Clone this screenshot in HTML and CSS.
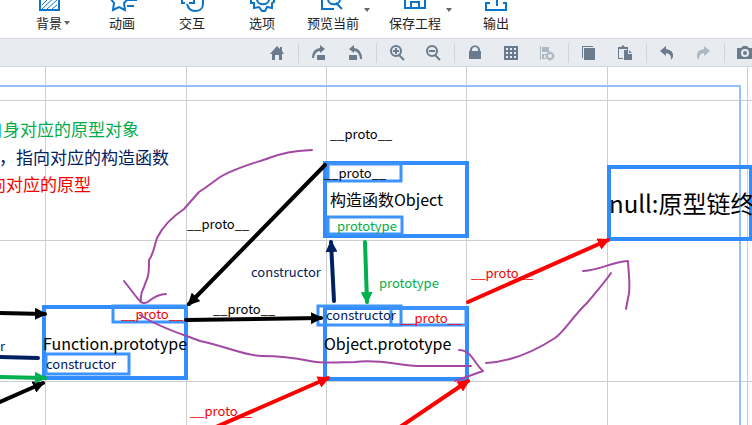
FILE: index.html
```html
<!DOCTYPE html>
<html lang="zh-CN">
<head>
<meta charset="utf-8">
<title>原型链</title>
<link rel="stylesheet" href="styles.css">
</head>
<body>
<header class="ribbon">
  <button class="command command-first"><svg class="command-icon" viewBox="0 0 32 22"><path class="thick" d="M7 -10H26V20H7Z"/><path d="M9 15L17 7M9 19L24 5M14 19L24 10M19 19L24 15"/></svg><span class="command-label">背景</span><i class="caret caret-inline"></i></button>
  <button class="command"><svg class="command-icon" viewBox="0 0 32 22"><path class="thick" d="M4 8L8 13L7 20L13 17L19 20L18 13L22 9M22 10H31M21 16H28"/></svg><span class="command-label">动画</span></button>
  <button class="command"><svg class="command-icon" viewBox="0 0 32 22"><path class="thick" d="M6 9V13H9M13 13H18V4M11 14C12 18 15 21 19 21C24 21 27 18 27 14V10"/></svg><span class="command-label">交互</span></button>
  <button class="command"><svg class="command-icon" viewBox="0 0 32 22"><path class="thick" d="M5 9V13L8 13L8 18L13 17L16 21L19 21L21 17L26 18L26 13L28 12V8M11 9C11 16 23 16 23 9"/></svg><span class="command-label">选项</span></button>
  <button class="command command-view"><svg class="command-icon" viewBox="0 0 32 22"><path class="thick" d="M5 5V19H17M11 9C11 16 23 16 23 9M19 13L25 19"/></svg><span class="command-label">预览当前</span><i class="caret caret-corner"></i></button>
  <button class="command command-save"><svg class="command-icon" viewBox="0 0 32 22"><path class="thick" d="M6 4V18H26V4M12 18V12H20V18"/></svg><span class="command-label">保存工程</span><i class="caret caret-corner"></i></button>
  <button class="command"><svg class="command-icon" viewBox="0 0 32 22"><path class="thick" d="M10 13H6V20H26V13H23M17 4V16"/></svg><span class="command-label">输出</span></button>
</header>
<nav class="toolbar" aria-label="工具栏">
  <button class="tool" aria-label="主页"><svg viewBox="0 0 16 16"><path d="M1 9L8 1L11 4V2H13V6L15 9H13V15H10V10H6V15H3V9Z"/></svg></button>
  <i class="divider"></i>
  <button class="tool" aria-label="向右旋转"><svg viewBox="0 0 16 16"><path d="M6 10H14V15H6ZM9 0L14 4L9 8V6Q4 6 3 13H1Q1 4 9 3Z"/></svg></button>
  <button class="tool" aria-label="向左旋转"><svg viewBox="0 0 16 16"><path d="M2 10H10V15H2ZM7 0L2 4L7 8V6Q12 6 13 14H15Q15 4 7 3Z"/></svg></button>
  <i class="divider"></i>
  <button class="tool" aria-label="放大"><svg class="outline" viewBox="0 0 16 16"><circle cx="7" cy="6" r="5"/><path d="M10 10L15 15M4 6H10M7 3V9"/></svg></button>
  <button class="tool" aria-label="缩小"><svg class="outline" viewBox="0 0 16 16"><circle cx="7" cy="6" r="5"/><path d="M10 10L15 15M4 6H10"/></svg></button>
  <i class="divider"></i>
  <button class="tool" aria-label="锁定"><svg viewBox="0 0 16 16"><path d="M2 6H3V5C3 -1 13 -1 13 5V6H14V14H2ZM5 6H11V5C11 1 5 1 5 5Z"/></svg></button>
  <button class="tool" aria-label="网格"><svg viewBox="0 0 16 16"><path fill-rule="evenodd" d="M1 1H15V15H1ZM3 3V5H5V3ZM7 3V5H9V3ZM11 3V5H13V3ZM3 7V9H5V7ZM7 7V9H9V7ZM11 7V9H13V7ZM3 11V13H5V11ZM7 11V13H9V11ZM11 11V13H13V11Z"/></svg></button>
  <button class="tool tool-faded" aria-label="对齐设置"><svg viewBox="0 0 16 16"><path d="M1 1H2V15H1ZM3 2H10V7H3ZM3 9H7V10H5V13H7V14H3Z"/><circle class="ring" cx="11" cy="11" r="3"/><path class="teeth" d="M11 6V8M11 14V16M6 11H8M14 11H16M8 8L9 9M13 13L14 14M8 14L9 13M13 9L14 8"/></svg></button>
  <i class="divider"></i>
  <button class="tool" aria-label="复制"><svg viewBox="0 0 16 16"><path d="M1 1H12V2H2V13H1ZM3 3H14V15H3Z"/></svg></button>
  <button class="tool" aria-label="粘贴"><svg viewBox="0 0 16 16"><path d="M1 2H4L6 0L8 2H11V5H10V4H2V13H6V14H1ZM7 5H11V9H15V15H7ZM12 5L15 8H12Z"/></svg></button>
  <i class="divider"></i>
  <button class="tool" aria-label="撤销"><svg viewBox="0 0 16 16"><path d="M1 6L7 1V4Q15 5 14 12L12 15Q13 9 7 8V11Z"/></svg></button>
  <button class="tool tool-faded" aria-label="重做"><svg viewBox="0 0 16 16"><path d="M15 6L9 1V4Q1 5 2 12L4 15Q3 9 9 8V11Z"/></svg></button>
  <i class="divider"></i>
  <button class="tool" aria-label="截图"><svg viewBox="0 0 16 16"><path fill-rule="evenodd" d="M0 3H4L6 1H10L12 3H16V14H0ZM8 4A4 4 0 1 0 8 12A4 4 0 1 0 8 4ZM8 6A2 2 0 1 1 8 10A2 2 0 1 1 8 6Z"/></svg></button>
</nav>
<main class="canvas">
<svg class="diagram" width="752" height="358" viewBox="0 67 752 358">
  <defs>
    <marker id="tip" viewBox="0 0 12 12" refX="10" refY="6" markerWidth="12" markerHeight="12" markerUnits="userSpaceOnUse" orient="auto"><path d="M0 0L12 6L0 12Z" fill="context-stroke"/></marker>
  </defs>
  <path class="grid" d="M45.500 67V425M186.500 67V425M326.500 67V425M466.500 67V425M607.500 67V425M747.500 67V425M0 100.500H752M0 240.500H752M0 381.500H752"/>
  <path class="page-frame" d="M0 86H740V425"/>
  <g class="box">
    <rect x="325" y="163" width="142" height="73"/>
    <rect x="44" y="307" width="142" height="71"/>
    <rect x="325" y="308" width="142" height="71"/>
    <rect x="609" y="167" width="142" height="72"/>
  </g>
  <g class="slot">
    <rect x="328" y="164" width="73" height="17"/>
    <rect x="328" y="217" width="74" height="17"/>
    <rect x="113" y="306" width="73" height="16"/>
    <rect x="46" y="354" width="83" height="20"/>
    <rect x="318" y="306" width="83" height="19"/>
    <rect x="391" y="308" width="75" height="17"/>
  </g>
  <g class="note">
    <text class="green" x="139" y="136" text-anchor="end">自身对应的原型对象</text>
    <text class="navy" x="169" y="164" text-anchor="end">，指向对应的构造函数</text>
    <text class="red" x="91" y="191" text-anchor="end">向对应的原型</text>
  </g>
  <g class="name">
    <text x="330" y="206">构造函数Object</text>
    <text x="43" y="350">Function.prototype</text>
    <text x="324" y="350">Object.prototype</text>
    <text class="large" x="609" y="213">null:原型链终</text>
  </g>
  <g class="link">
    <path class="black" d="M325 165L189 304"/>
    <path class="black" d="M186 320L321 318"/>
    <path class="black" d="M0 313L45 314"/>
    <path class="black" d="M0 402L43 383"/>
    <path class="navy" d="M0 357L38 358" marker-end="none"/>
    <path class="green" d="M0 377L45 378"/>
    <path class="navy" d="M334 301L331 242"/>
    <path class="green" d="M365 242L367 302"/>
    <path class="red" d="M468 302L608 240"/>
    <path class="red" d="M216 427L328 378"/>
    <path class="red" d="M400 427L468 381"/>
  </g>
  <g class="label">
    <text x="330" y="139">__proto__</text>
    <text x="324" y="178">__proto__</text>
    <text x="187" y="229">__proto__</text>
    <text x="213" y="314">__proto__</text>
    <text class="red" x="121" y="319">__proto__</text>
    <text class="red" x="400" y="323">__proto__</text>
    <text class="red" x="471" y="278">__proto__</text>
    <text class="red" x="190" y="416">__proto__</text>
    <text class="green" x="337" y="231">prototype</text>
    <text class="green" x="379" y="288">prototype</text>
    <text class="navy" x="251" y="277">constructor</text>
    <text class="navy" x="326" y="320">constructor</text>
    <text class="navy" x="46" y="369">constructor</text>
    <text class="navy" x="5" y="351" text-anchor="end">constructor</text>
  </g>
  <g class="sketch">
    <path d="M312 150C292 151 283 153 269 158S228 170 216 180L205 188L199 192L184 209C172 217 162 228 157 238C154 247 154 253 149 260C149 281 147 277 144 287Q140 294 141 301M124 281L138 299Q143 306 149 301Q158 294 166 294"/>
    <path d="M140 315C160 328 182 334 200 341C225 346 245 356 262 356C277 356 290 357 310 361C325 364 340 362 355 362C380 359 395 365 418 366H471M459 350C471 350 474 363 483 371L455 381"/>
    <path d="M486 363C507 362 532 353 555 338C564 332 573 316 587 303C597 291 605 282 611 273M583 271C602 270 610 262 628 261C629 280 631 289 628 298L626 309"/>
  </g>
</svg>
</main>
</body>
</html>
```
FILE: styles.css
```css
* { box-sizing: border-box; }

body {
  margin: 0;
  min-height: 100vh;
  display: flex;
  flex-direction: column;
  overflow: hidden;
  background: #fff;
  font-family: "Noto Sans CJK SC", "Noto Sans", sans-serif;
}

button {
  padding: 0;
  border: 0;
  background: none;
  font: inherit;
  color: inherit;
}

.ribbon {
  display: flex;
  height: 38px;
  padding-left: 11px;
  overflow: hidden;
}

.command {
  position: relative;
  flex: none;
  display: flex;
  flex-direction: column;
  align-items: center;
  justify-content: flex-start;
  width: 70px;
  color: #222;
}

.command-first { width: 76px; }
.command-view { width: 72px; }
.command-save { width: 92px; }

.command-icon {
  flex: none;
  width: 32px;
  height: 22px;
  margin-top: -10px;
  fill: none;
  stroke: #0a74c8;
  stroke-width: 1;
}

.command-icon .thick { stroke-width: 2; }

.command-label {
  padding-top: 1px;
  font-size: 13px;
  line-height: 20px;
  white-space: nowrap;
}

.caret {
  position: absolute;
  border: 4px solid transparent;
  border-width: 4px 3px 0;
  border-top-color: #666;
}

.caret-inline { top: 21px; right: 17px; }
.caret-corner { top: 8px; left: calc(50% + 31px); }

.toolbar {
  display: flex;
  align-items: center;
  height: 29px;
  padding-left: 259px;
  overflow: hidden;
  background: #e8ebf0;
  border-top: 1px solid #d3d7df;
  border-bottom: 1px solid #d3d7df;
}

.tool {
  flex: none;
  display: flex;
  justify-content: center;
  width: 36px;
  fill: #697b8c;
}

.tool svg { width: 16px; height: 16px; }
.tool-faded { fill: #adb7c1; }

.outline {
  fill: none;
  stroke: #697b8c;
  stroke-width: 2;
}

.ring {
  fill: none;
  stroke: #adb7c1;
  stroke-width: 2;
}

.teeth { stroke: #adb7c1; }

.divider {
  flex: none;
  width: 1px;
  height: 20px;
  margin: 0 2px 0 3px;
  background: #d0d5dd;
}

.canvas { flex: 1; overflow: hidden; }
.diagram { display: block; overflow: visible; }

.grid { stroke: #cecece; }
.page-frame { fill: none; stroke: #91c2ff; stroke-width: 2; }
.box { fill: none; stroke: #308cff; stroke-width: 4; }
.slot { fill: none; stroke: #3d93ff; stroke-width: 3; }

.note { font-size: 17px; }
.name { font-size: 16px; }
.name .large { font-size: 24px; }
.label { font-size: 13px; }

text.red { fill: #f50000; }
text.green { fill: #00ad4d; }
text.navy { fill: #002060; }

.link path {
  fill: none;
  stroke-width: 4;
  stroke-linecap: round;
  marker-end: url(#tip);
}

.link .black { stroke: #000; }
.link .red { stroke: #f00; }
.link .green { stroke: #00b050; }
.link .navy { stroke: #002060; }
.link [marker-end="none"] { marker-end: none; }

.sketch {
  fill: none;
  stroke: #a349a4;
  stroke-width: 2;
  stroke-linecap: round;
  stroke-linejoin: round;
}
```
